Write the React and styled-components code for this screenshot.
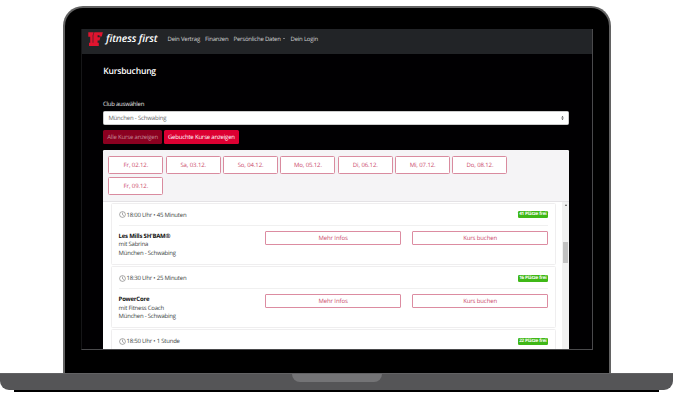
import React from "react";
import styled, { createGlobalStyle } from "styled-components";

const days = [
  "Fr, 02.12.",
  "Sa, 03.12.",
  "So, 04.12.",
  "Mo, 05.12.",
  "Di, 06.12.",
  "Mi, 07.12.",
  "Do, 08.12.",
  "Fr, 09.12.",
];

const courses = [
  {
    time: "18:00 Uhr • 45 Minuten",
    name: "Les Mills SH'BAM®",
    coach: "mit Sabrina",
    free: "41 Plätze frei",
  },
  {
    time: "18:30 Uhr • 25 Minuten",
    name: "PowerCore",
    coach: "mit Fitness Coach",
    free: "16 Plätze frei",
  },
  {
    time: "18:50 Uhr • 1 Stunde",
    name: "",
    coach: "",
    free: "22 Plätze frei",
  },
];

const GlobalStyle = createGlobalStyle`
  * {
    box-sizing: border-box;
  }
  body {
    margin: 0;
    background: #fff;
    font-family: "Open Sans", "Noto Sans", sans-serif;
    font-size: 6px;
    letter-spacing: -0.22px;
    text-rendering: geometricPrecision;
    overflow: hidden;
  }
`;

const Laptop = styled.div`
  display: flex;
  flex-direction: column;
  align-items: center;
  width: 673px;
  height: 400px;
  padding-top: 6px;
`;

const Lid = styled.div`
  width: 548px;
  height: 367px;
  padding: 21px 17px 0 16px;
  background: #000;
  border: 2px solid #636363;
  border-bottom: 0;
  border-radius: 20px 20px 0 0;
`;

const Screen = styled.div`
  display: flex;
  flex-direction: column;
  width: 512px;
  height: 321px;
  background: #010002;
  border: 1px solid #4a4a4c;
  border-top: 0;
  border-left-color: #161618;
  overflow: hidden;
`;

const Base = styled.div`
  display: flex;
  justify-content: center;
  width: 673px;
  height: 16.5px;
  background: #555557;
  border-top: 1px solid #626264;
  border-radius: 0 0 9px 9px;
`;

const Notch = styled.div`
  width: 90px;
  height: 8px;
  background: #747476;
  border-radius: 0 0 8px 8px;
`;

const Foot = styled.div`
  width: 645px;
  height: 2.5px;
  background: #000;
`;

const Navbar = styled.nav`
  display: flex;
  flex-shrink: 0;
  height: 25px;
  padding-left: 6px;
  background: #222427;
`;

const Brand = styled.div`
  display: flex;
  width: 80px;
  padding-top: 3px;
`;

const BrandName = styled.span`
  margin-left: 3.5px;
  color: #fff;
  font-family: "Open Sans", sans-serif;
  font-size: 10.3px;
  font-style: italic;
  font-weight: 600;
  line-height: 14px;
  letter-spacing: -0.1px;
  white-space: nowrap;
`;

const NavLink = styled.a`
  width: ${(props) => props.$width}px;
  padding-top: 5px;
  color: #d2d2d3;
  line-height: 10px;
  white-space: nowrap;
`;

const Caret = styled.span`
  display: inline-block;
  margin-left: 2px;
  border: 1px solid transparent;
  border-top-color: #d2d2d3;
  border-bottom: 0;
  vertical-align: 2px;
`;

const Page = styled.main`
  display: flex;
  flex-direction: column;
  width: 487.3px;
  padding-left: 21.4px;
  color: #fff;
`;

const Title = styled.h1`
  margin: 11px 0 22.5px 0.4px;
  font-size: 8.6px;
  font-weight: 600;
  line-height: 12px;
  letter-spacing: -0.22px;
`;

const Label = styled.label`
  height: 8px;
  color: #e4e4e4;
  line-height: 8px;
`;

const Select = styled.div`
  display: flex;
  align-items: center;
  justify-content: space-between;
  height: 14px;
  margin-top: 3px;
  padding: 0 4px 0 4.5px;
  background: #fff;
  border: 0.5px solid #ccc;
  border-radius: 1.5px;
  color: #666;
  letter-spacing: -0.18px;
`;

const FilterRow = styled.div`
  display: flex;
  gap: 1.5px;
  margin: 5px 0 6px;
`;

const FilterButton = styled.div`
  width: ${(props) => props.$width}px;
  height: 14px;
  background: ${(props) => (props.$active ? "#dc0032" : "#8b0020")};
  border-radius: 1.5px;
  color: ${(props) => (props.$active ? "#fff" : "#c58b98")};
  line-height: 14px;
  text-align: center;
  letter-spacing: -0.19px;
  white-space: nowrap;
`;

const Panel = styled.section`
  height: 199px;
  background: #fff;
  border-radius: 1.5px 1.5px 0 0;
  overflow: hidden;
`;

const DayBar = styled.div`
  display: flex;
  flex-wrap: wrap;
  align-content: flex-start;
  gap: 3px 2.35px;
  height: 52px;
  padding: 6px 20px 0 5.5px;
  background: #f5f4f6;
  border-bottom: 1px solid #e4e2e5;
`;

const DayButton = styled.div`
  width: 55px;
  height: 18px;
  background: #fff;
  border: 1px solid #d98b9f;
  border-radius: 1.5px;
  color: #cb4a6b;
  line-height: 16.5px;
  text-align: center;
  letter-spacing: -0.1px;
`;

const ListArea = styled.div`
  display: flex;
  justify-content: space-between;
  height: 147px;
  padding-left: 8.2px;
`;

const CourseList = styled.div`
  width: 444.5px;
  padding-top: 1.3px;
`;

const Card = styled.article`
  height: 62px;
  margin-bottom: 1.2px;
  padding: 0 6.5px;
  border: 1px solid #efeeef;
  border-radius: 1.5px;
  color: #3c3f42;
`;

const CardHead = styled.header`
  display: flex;
  align-items: center;
  justify-content: space-between;
  height: 22px;
  padding-top: 1.4px;
  border-bottom: 1px solid #f0f0f0;
`;

const Time = styled.div`
  display: flex;
  align-items: center;
  gap: 1px;
`;

const Badge = styled.span`
  width: 30.5px;
  height: 7px;
  background: #3fb817;
  border-radius: 1.2px;
  color: #fff;
  font-size: 4.6px;
  font-weight: 700;
  line-height: 7px;
  text-align: center;
  letter-spacing: -0.16px;
  white-space: nowrap;
`;

const CardBody = styled.div`
  display: flex;
  justify-content: space-between;
  padding-top: 5px;
`;

const Info = styled.div`
  padding-top: 0.8px;
  line-height: 8.8px;
`;

const CourseName = styled.strong`
  display: block;
  color: #111;
  font-weight: 700;
`;

const Actions = styled.div`
  display: flex;
  gap: 11px;
`;

const ActionButton = styled.div`
  width: 136px;
  height: 14px;
  border: 1px solid #dc8ca1;
  border-radius: 1px;
  color: #cb4a6b;
  line-height: 12.5px;
  text-align: center;
  letter-spacing: -0.12px;
`;

const Scrollbar = styled.div`
  width: 6.5px;
  background: #f1f1f1;
`;

const ScrollArrow = styled.div`
  width: 2px;
  margin: 2px auto 36px;
  border: 1px solid transparent;
  border-top: 0;
  border-bottom: 2px solid #555;
`;

const Thumb = styled.div`
  width: 5px;
  height: 21px;
  margin: 0 auto;
  background: #c1c1c1;
`;

const Logo = () => (
  <svg width="15" height="15" viewBox="0 0 15 15" fill="#e0142f">
    <path d="M.3.3h5.4l-.5 2.5H4.7v7.9h1.6v3.4H1v-3.4h1.2V4.8H.3z" />
    <path d="M6.3.3h8.5l-1 4.2h-2.3V3.2H9.6v2h2.8l-.9 3.3H9.6v2.2h1.2v3.4H5.3V3.6z" />
  </svg>
);

const Clock = () => (
  <svg width="7" height="7" viewBox="0 0 14 14" fill="none" stroke="#555">
    <circle cx="7" cy="7" r="5.8" />
    <path d="M7 3.2v4.2l2.8 1.8" />
  </svg>
);

const App = () => {
  return (
    <Laptop>
      <GlobalStyle />
      <Lid>
        <Screen>
          <Navbar>
            <Brand>
              <Logo />
              <BrandName>fitness first</BrandName>
            </Brand>
            <NavLink $width={37.5}>Dein Vertrag</NavLink>
            <NavLink $width={28.5}>Finanzen</NavLink>
            <NavLink $width={57}>
              Persönliche Daten
              <Caret />
            </NavLink>
            <NavLink $width={30}>Dein Login</NavLink>
          </Navbar>
          <Page>
            <Title>Kursbuchung</Title>
            <Label>Club auswählen</Label>
            <Select>
              München - Schwabing
              <svg width="3" height="4" viewBox="0 0 3 4" fill="#333">
                <path d="M.3 1.6L1.5 0l1.2 1.6zM.3 2.4L1.5 4l1.2-1.6z" />
              </svg>
            </Select>
            <FilterRow>
              <FilterButton $width={59.5}>Alle Kurse anzeigen</FilterButton>
              <FilterButton $width={75} $active>
                Gebuchte Kurse anzeigen
              </FilterButton>
            </FilterRow>
            <Panel>
              <DayBar>
                {days.map((day) => (
                  <DayButton key={day}>{day}</DayButton>
                ))}
              </DayBar>
              <ListArea>
                <CourseList>
                  {courses.map((course) => (
                    <Card key={course.time}>
                      <CardHead>
                        <Time>
                          <Clock />
                          {course.time}
                        </Time>
                        <Badge>{course.free}</Badge>
                      </CardHead>
                      {course.name && (
                        <CardBody>
                          <Info>
                            <CourseName>{course.name}</CourseName>
                            {course.coach}
                            <br />
                            München - Schwabing
                          </Info>
                          <Actions>
                            <ActionButton>Mehr Infos</ActionButton>
                            <ActionButton>Kurs buchen</ActionButton>
                          </Actions>
                        </CardBody>
                      )}
                    </Card>
                  ))}
                </CourseList>
                <Scrollbar>
                  <ScrollArrow />
                  <Thumb />
                </Scrollbar>
              </ListArea>
            </Panel>
          </Page>
        </Screen>
      </Lid>
      <Base>
        <Notch />
      </Base>
      <Foot />
    </Laptop>
  );
};

export default App;
